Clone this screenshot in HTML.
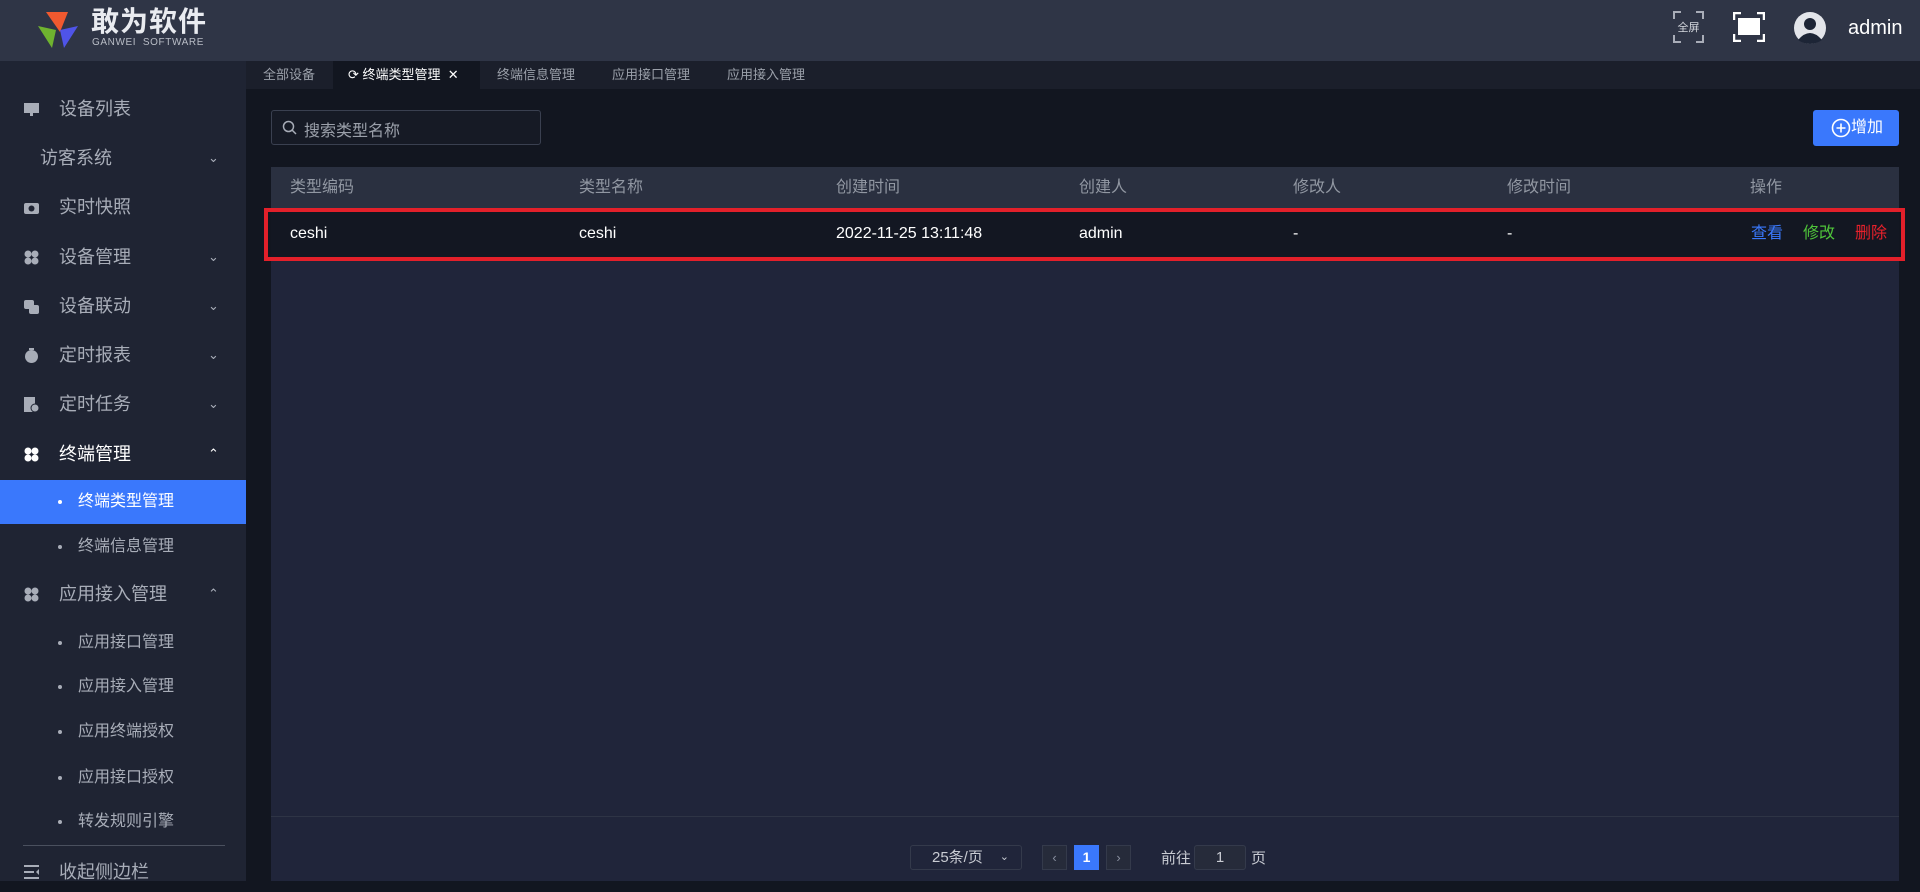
<!DOCTYPE html>
<html><head><meta charset="utf-8"><style>
*{margin:0;padding:0;box-sizing:border-box}
body{width:1920px;height:881px;overflow:hidden;background:#121620;font-family:"Liberation Sans","Noto Sans CJK SC",sans-serif;position:relative;color:#c9ccd3}
.abs{position:absolute}
.hdr{left:0;top:0;width:1920px;height:61px;background:#2f3546}
.side{left:0;top:61px;width:246px;height:820px;background:#1f2433}
.item{position:absolute;left:0;width:246px;height:40px;line-height:40px;font-size:18px;color:#a8adb8}
.item .t{position:absolute;left:59px}
.item .ic{position:absolute;left:24px;top:13px;width:15px;height:15px}
.chev{position:absolute;left:208px;font-size:13px;color:#a8adb8}
.sub{position:absolute;left:0;width:246px;height:44px;line-height:44px;font-size:16px;color:#a8adb8}
.sub .d{position:absolute;left:58px;top:20px;width:4px;height:4px;background:#a8adb8;border-radius:50%}
.sub .t{position:absolute;left:78px}
.tabs{left:246px;top:61px;width:1674px;height:28px;background:#1b1f2b}
.tab{position:absolute;top:0;height:28px;line-height:28px;font-size:13px;color:#9ba0aa}
.th{position:absolute;top:167px;font-size:16px;line-height:41px;color:#9197a2}
.td{position:absolute;top:211px;font-size:16px;line-height:46px;color:#fff}
</style></head><body>
<div class="abs hdr">
 <svg class="abs" style="left:38px;top:8px" width="44" height="44" viewBox="0 0 44 44">
  <path d="M8 4 L30 4 L22 24 Z" fill="#f0592f"/>
  <path d="M0 18 L18 22 L14 40 Z" fill="#6fb32f"/>
  <path d="M40 18 L22 22 L26 40 Z" fill="#4f54e8"/>
 </svg>
 <div class="abs" style="left:91px;top:8px;font-size:28px;line-height:28px;font-weight:bold;color:#e9ebf0;letter-spacing:1px">敢为软件</div>
 <div class="abs" style="left:92px;top:37px;font-size:10px;line-height:11px;color:#b9bdc6;letter-spacing:.6px">GANWEI&nbsp; SOFTWARE</div>
 <svg class="abs" style="left:1673px;top:11px" width="31" height="32" viewBox="0 0 31 32"><path d="M1 8V1h7M23 1h7v7M30 24v7h-7M8 31H1v-7" stroke="#a9adb8" stroke-width="2" fill="none"/><text x="15.5" y="20" font-size="11" fill="#d5d8de" text-anchor="middle" font-family="Noto Sans CJK SC">全屏</text></svg>
 <svg class="abs" style="left:1733px;top:12px" width="32" height="30" viewBox="0 0 32 30"><path d="M1 8V1h7M24 1h7v7M31 22v7h-7M8 29H1v-7" stroke="#fff" stroke-width="2.5" fill="none"/><rect x="5" y="6" width="22" height="17" fill="#fff"/></svg>
 <svg class="abs" style="left:1794px;top:12px" width="32" height="32" viewBox="0 0 32 32"><circle cx="16" cy="16" r="16" fill="#e3e5ea"/><circle cx="16" cy="12" r="6" fill="#1d2536"/><path d="M4 28 Q16 14 28 28 Q16 36 4 28Z" fill="#1d2536"/></svg>
 <div class="abs" style="left:1848px;top:17px;font-size:20px;color:#fff">admin</div>
</div>
<div class="abs side"></div>
<div class="item" style="top:89px"><svg class="ic" viewBox="0 0 15 15"><rect x="0" y="1" width="15" height="10" fill="#a8adb8"/><rect x="6" y="11" width="3" height="3" fill="#a8adb8"/></svg><span class="t">设备列表</span></div>
<div class="item" style="top:138px"><span class="t" style="left:40px">访客系统</span><span class="chev">⌄</span></div>
<div class="item" style="top:187px"><svg class="ic" viewBox="0 0 15 15"><rect x="0" y="3" width="15" height="11" rx="2" fill="#a8adb8"/><circle cx="7.5" cy="8.5" r="3" fill="#1f2433"/></svg><span class="t">实时快照</span></div>
<div class="item" style="top:237px"><svg class="ic" viewBox="0 0 15 15"><circle cx="4" cy="4" r="3.5" fill="#a8adb8"/><circle cx="11" cy="4" r="3.5" fill="#a8adb8"/><circle cx="4" cy="11" r="3.5" fill="#a8adb8"/><circle cx="11" cy="11" r="3.5" fill="#a8adb8"/></svg><span class="t">设备管理</span><span class="chev">⌄</span></div>
<div class="item" style="top:286px"><svg class="ic" viewBox="0 0 15 15"><rect x="0" y="1" width="10" height="9" rx="2" fill="#a8adb8"/><rect x="5" y="6" width="10" height="9" rx="2" fill="#a8adb8"/></svg><span class="t">设备联动</span><span class="chev">⌄</span></div>
<div class="item" style="top:335px"><svg class="ic" viewBox="0 0 15 15"><circle cx="7.5" cy="8.5" r="6.5" fill="#a8adb8"/><rect x="5" y="0" width="5" height="2" fill="#a8adb8"/></svg><span class="t">定时报表</span><span class="chev">⌄</span></div>
<div class="item" style="top:384px"><svg class="ic" viewBox="0 0 15 15"><rect x="0" y="0" width="11" height="15" fill="#a8adb8"/><circle cx="11" cy="11" r="4" fill="#a8adb8" stroke="#1f2433"/></svg><span class="t">定时任务</span><span class="chev">⌄</span></div>
<div class="item" style="top:434px;color:#fff"><svg class="ic" viewBox="0 0 15 15"><circle cx="4" cy="4" r="3.5" fill="#fff"/><circle cx="11" cy="4" r="3.5" fill="#fff"/><circle cx="4" cy="11" r="3.5" fill="#fff"/><circle cx="11" cy="11" r="3.5" fill="#fff"/></svg><span class="t">终端管理</span><span class="chev" style="color:#fff">⌃</span></div>
<div class="sub" style="top:480px;background:#3a78fc;color:#fff"><span class="d" style="background:#fff"></span><span class="t">终端类型管理</span></div>
<div class="sub" style="top:525px"><span class="d"></span><span class="t">终端信息管理</span></div>
<div class="item" style="top:574px"><svg class="ic" viewBox="0 0 15 15"><circle cx="4" cy="4" r="3.5" fill="#a8adb8"/><circle cx="11" cy="4" r="3.5" fill="#a8adb8"/><circle cx="4" cy="11" r="3.5" fill="#a8adb8"/><circle cx="11" cy="11" r="3.5" fill="#a8adb8"/></svg><span class="t">应用接入管理</span><span class="chev">⌃</span></div>
<div class="sub" style="top:621px"><span class="d"></span><span class="t">应用接口管理</span></div>
<div class="sub" style="top:665px"><span class="d"></span><span class="t">应用接入管理</span></div>
<div class="sub" style="top:710px"><span class="d"></span><span class="t">应用终端授权</span></div>
<div class="sub" style="top:756px"><span class="d"></span><span class="t">应用接口授权</span></div>
<div class="sub" style="top:800px"><span class="d"></span><span class="t">转发规则引擎</span></div>
<div class="abs" style="left:23px;top:845px;width:202px;height:1px;background:#4a505e"></div>
<div class="item" style="top:852px"><svg class="ic" viewBox="0 0 15 15"><path d="M0 1h15M0 7h10M0 13h15" stroke="#a8adb8" stroke-width="2"/><path d="M15 4v6l-3-3z" fill="#a8adb8"/></svg><span class="t">收起侧边栏</span></div>

<div class="abs tabs"></div>
<div class="abs" style="left:333px;top:61px;width:147px;height:28px;background:#121620"></div>
<div class="tab" style="left:263px;top:61px">全部设备</div>
<div class="tab" style="left:348px;top:61px;color:#fff">⟳ 终端类型管理 &nbsp;✕</div>
<div class="tab" style="left:497px;top:61px">终端信息管理</div>
<div class="tab" style="left:612px;top:61px">应用接口管理</div>
<div class="tab" style="left:727px;top:61px">应用接入管理</div>

<div class="abs" style="left:271px;top:110px;width:270px;height:35px;border:1px solid #3a4050;border-radius:3px;background:#161a25"></div>
<svg class="abs" style="left:282px;top:120px" width="15" height="15" viewBox="0 0 15 15"><circle cx="6.5" cy="6.5" r="5" stroke="#a8adb8" stroke-width="1.5" fill="none"/><path d="M10 10l4 4" stroke="#a8adb8" stroke-width="1.5"/></svg>
<div class="abs" style="left:304px;top:117px;font-size:16px;color:#9ba0aa">搜索类型名称</div>
<div class="abs" style="left:1813px;top:110px;width:86px;height:36px;background:#3a78fc;border-radius:3px;color:#fff;font-size:16px;line-height:36px;padding-left:38px">增加</div>
<svg class="abs" style="left:1831px;top:118px" width="20" height="20" viewBox="0 0 20 20"><circle cx="10" cy="10" r="8.5" stroke="#fff" stroke-width="1.6" fill="none"/><path d="M10 5.5v9M5.5 10h9" stroke="#fff" stroke-width="1.6"/></svg>

<div class="abs" style="left:271px;top:167px;width:1628px;height:714px;background:#20253a"></div>
<div class="abs" style="left:271px;top:167px;width:1628px;height:41px;background:#2a3040"></div>
<div class="abs" style="left:271px;top:211px;width:1628px;height:46px;background:#131722"></div>
<div class="abs" style="left:271px;top:816px;width:1628px;height:1px;background:#2e3445"></div>
<div class="th" style="left:290px">类型编码</div>
<div class="th" style="left:579px">类型名称</div>
<div class="th" style="left:836px">创建时间</div>
<div class="th" style="left:1079px">创建人</div>
<div class="th" style="left:1293px">修改人</div>
<div class="th" style="left:1507px">修改时间</div>
<div class="th" style="left:1750px">操作</div>
<div class="td" style="left:290px">ceshi</div>
<div class="td" style="left:579px">ceshi</div>
<div class="td" style="left:836px">2022-11-25 13:11:48</div>
<div class="td" style="left:1079px">admin</div>
<div class="td" style="left:1293px">-</div>
<div class="td" style="left:1507px">-</div>
<div class="td" style="left:1751px;color:#3a78fc">查看</div>
<div class="td" style="left:1803px;color:#4fc53a">修改</div>
<div class="td" style="left:1855px;color:#e8212b">删除</div>
<div class="abs" style="left:264px;top:208px;width:1641px;height:53px;border:4px solid #e3202a"></div>

<div class="abs" style="left:910px;top:845px;width:112px;height:25px;border:1px solid #343a4b;border-radius:3px;font-size:15px;line-height:23px;color:#c9ccd3;padding-left:21px">25条/页<span style="position:absolute;right:12px;font-size:11px">⌄</span></div>
<div class="abs" style="left:1042px;top:845px;width:25px;height:25px;border:1px solid #343a4b;background:#262b3a;color:#8a90a0;text-align:center;line-height:23px;font-size:13px">‹</div>
<div class="abs" style="left:1074px;top:845px;width:25px;height:25px;background:#3a78fc;color:#fff;text-align:center;line-height:25px;font-size:14px;font-weight:bold">1</div>
<div class="abs" style="left:1106px;top:845px;width:25px;height:25px;border:1px solid #343a4b;background:#262b3a;color:#8a90a0;text-align:center;line-height:23px;font-size:13px">›</div>
<div class="abs" style="left:1161px;top:847px;font-size:15px;color:#c9ccd3">前往</div>
<div class="abs" style="left:1194px;top:845px;width:52px;height:25px;border:1px solid #343a4b;background:#262b3a;border-radius:3px;text-align:center;line-height:23px;font-size:15px;color:#c9ccd3">1</div>
<div class="abs" style="left:1251px;top:847px;font-size:15px;color:#c9ccd3">页</div>
</body></html>
